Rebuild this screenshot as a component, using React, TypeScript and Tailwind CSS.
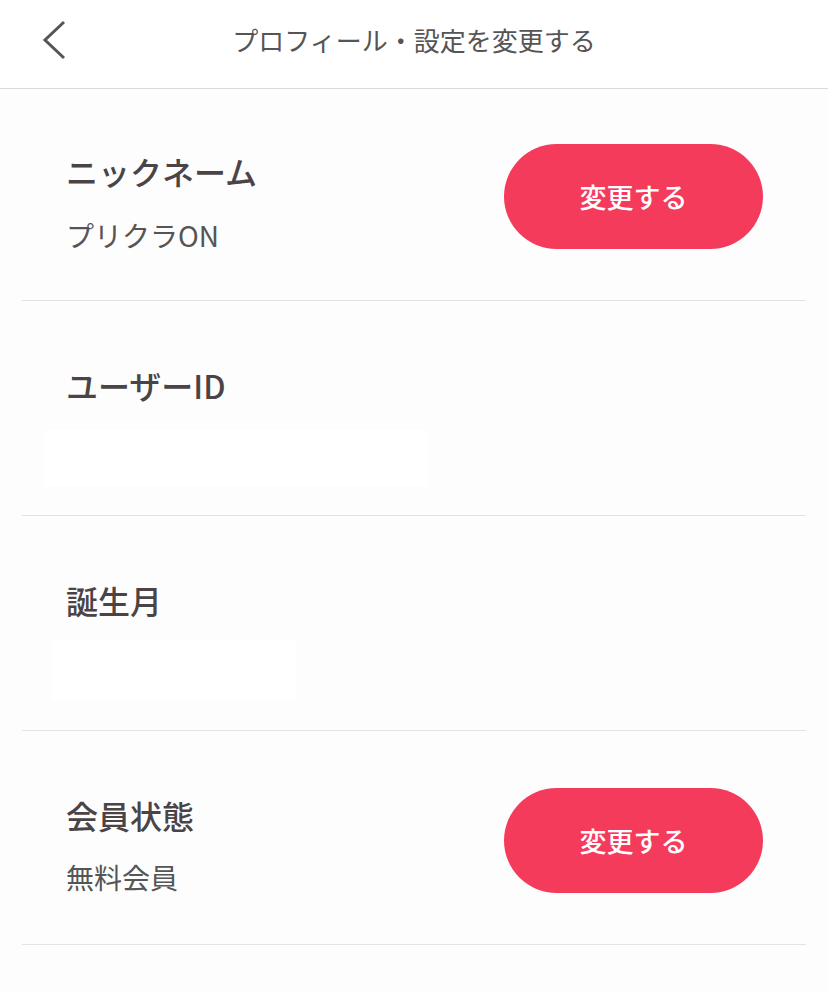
import React from "react";

const font = { fontFamily: '"Noto Sans CJK JP", "Noto Sans", sans-serif' };

function PillButton() {
  return (
    <button className="flex h-[105px] w-[259px] items-center justify-center rounded-full bg-[#f53b5b] text-[27px] font-medium leading-[27px] text-white">
      変更する
    </button>
  );
}

export default function App() {
  return (
    <div className="min-h-[992px] w-[828px] bg-[#fdfdfd] text-[#4a4446]" style={font}>
      <header className="relative flex h-[89px] items-start justify-center border-b border-[#dadada] bg-white pt-[27px]">
        <button className="absolute left-[40px] top-[20px] flex h-[40px] w-[30px] items-center justify-center" aria-label="戻る">
          <svg width="30" height="40" viewBox="0 0 30 40" fill="none">
            <path d="M24 2 L5 20 L24 38" stroke="#555" strokeWidth="3" strokeLinecap="butt" strokeLinejoin="miter" />
          </svg>
        </button>
        <h1 className="text-[26px] font-normal leading-[26px] text-[#555]">プロフィール・設定を変更する</h1>
      </header>

      <div className="mx-[22px]">
        <section className="flex h-[212px] items-start justify-between border-b border-[#e3e3e3]">
          <div className="pl-[44px] pt-[66px]">
            <div className="text-[32px] font-medium leading-[32px]">ニックネーム</div>
            <div className="mt-[34px] text-[28px] leading-[28px] text-[#555]">プリクラON</div>
          </div>
          <div className="mr-[43px] mt-[55px]">
            <PillButton />
          </div>
        </section>

        <section className="h-[215px] border-b border-[#e3e3e3]">
          <div className="pl-[44px] pt-[68px] text-[32px] font-medium leading-[32px]">ユーザーID</div>
          <div className="ml-[22px] mt-[29px] h-[56px] w-[384px] bg-white" />
        </section>

        <section className="h-[215px] border-b border-[#e3e3e3]">
          <div className="pl-[44px] pt-[68px] text-[32px] font-medium leading-[32px]">誕生月</div>
          <div className="ml-[30px] mt-[25px] h-[59px] w-[244px] bg-white" />
        </section>

        <section className="flex h-[214px] items-start justify-between border-b border-[#e3e3e3]">
          <div className="pl-[44px] pt-[68px]">
            <div className="text-[32px] font-medium leading-[32px]">会員状態</div>
            <div className="mt-[32px] text-[28px] leading-[28px] text-[#555]">無料会員</div>
          </div>
          <div className="mr-[43px] mt-[57px]">
            <PillButton />
          </div>
        </section>
      </div>
    </div>
  );
}
